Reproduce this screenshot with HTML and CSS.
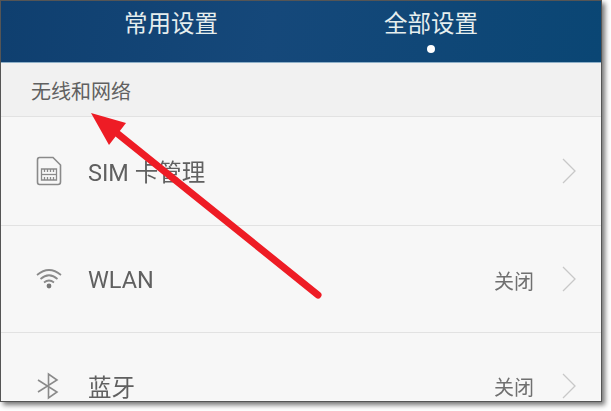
FILE: index.html
```html
<!DOCTYPE html>
<html>

<head>
    <meta charset="utf-8">
    <title>设置</title>
    <link rel="stylesheet" href="styles.css">
</head>

<body>
    <div id="screen">
        <div id="tabs">
            <div class="tab">常用设置</div>
            <div class="tab active">全部设置</div>
        </div>
        <div id="section-title">无线和网络</div>
        <div class="row row-sim">
            <svg class="icon" viewBox="0 0 26 30" width="26" height="30">
                <path d="M3.5 1.5H17L24.5 9V26Q24.5 28.5 22 28.5H3.5Q1.5 28.5 1.5 26V4Q1.5 1.5 3.5 1.5Z" fill="none" stroke="#8a8a8a" stroke-width="1.6" />
                <path d="M5.5 13H20.5V24H5.5Z" fill="none" stroke="#8a8a8a" stroke-width="1.3" />
                <path d="M5.5 18.500H20.500" stroke="#8a8a8a" stroke-width="1.3" />
                <path d="M8.500 13V16M11.500 13V16M14.500 13V16M17.500 13V16M8.500 21V24M11.500 21V24M14.500 21V24M17.500 21V24" stroke="#8a8a8a" stroke-width="1.3" />
            </svg>
            <span class="label">SIM 卡管理</span>
            <svg class="chevron" viewBox="0 0 14 26" width="14" height="26">
                <path d="M1 1L13 13L1 25" fill="none" stroke="#c8c8c8" stroke-width="1.3" />
            </svg>
        </div>
        <div class="row row-wlan">
            <svg class="icon" viewBox="0 0 26 30" width="26" height="30">
                <path d="M1 11Q13 1 25 11M4.500 15Q13 7.500 21.500 15M8 18.500Q13 14.500 18 18.500" fill="none" stroke="#8a8a8a" stroke-width="1.7" />
                <circle cx="13" cy="22" r="2.400" fill="#777" />
            </svg>
            <span class="label">WLAN</span>
            <span class="value">关闭</span>
            <svg class="chevron" viewBox="0 0 14 26" width="14" height="26">
                <path d="M1 1L13 13L1 25" fill="none" stroke="#c8c8c8" stroke-width="1.3" />
            </svg>
        </div>
        <div class="row row-bt">
            <svg class="icon" viewBox="0 0 26 30" width="26" height="30">
                <path d="M2 9L21 21L12.500 27V3L21 9L2 21" fill="none" stroke="#8a8a8a" stroke-width="1.6" />
            </svg>
            <span class="label">蓝牙</span>
            <span class="value">关闭</span>
            <svg class="chevron" viewBox="0 0 14 26" width="14" height="26">
                <path d="M1 1L13 13L1 25" fill="none" stroke="#c8c8c8" stroke-width="1.3" />
            </svg>
        </div>
    </div>
    <svg id="arrow" viewBox="0 0 611 411" width="611" height="411">
        <path d="M118 134L318 295" stroke="#ee1c25" stroke-width="7" stroke-linecap="round" />
        <path d="M91 113L126 123L109 145Z" fill="#ee1c25" />
    </svg>
</body>

</html>
```

FILE: styles.css
```css
body {
    margin: 0;
    width: 611px;
    height: 411px;
    overflow: hidden;
    background: #fff;
    font-family: Roboto, "Noto Sans CJK SC", sans-serif;
}

#screen {
    width: 600px;
    height: 400px;
    border: 1px solid #555;
    background: #f7f7f7;
    box-shadow: 3px 3px 5px rgba(0, 0, 0, 0.55);
    overflow: hidden;
    filter: blur(0.35px);
}

#tabs {
    height: 61px;
    display: flex;
    gap: 168px;
    padding-left: 123px;
    background: linear-gradient(100deg, #0f3f6f, #15487a 45%, #0a4674);
    border-bottom: 1px solid #8fb0c8;
}

.tab {
    width: 92px;
    height: 46px;
    line-height: 46px;
    text-align: center;
    white-space: nowrap;
    color: #e6eeee;
    font-size: 23.5px;
}

.tab.active::after {
    content: "";
    display: block;
    width: 8px;
    height: 8px;
    border-radius: 50%;
    background: #fff;
    margin: -2px 0 0 43px;
}

#section-title {
    height: 53px;
    line-height: 58px;
    padding-left: 30px;
    font-size: 20px;
    color: #606060;
    background: #f1f1f1;
    border-bottom: 1px solid #e2e2e2;
}

.row {
    display: flex;
    align-items: center;
    padding: 0 25px 0 35px;
    border-bottom: 1px solid #e2e2e2;
}

.row-sim {
    height: 108px;
}

.row-wlan {
    height: 106px;
}

.row-bt {
    height: 105px;
}

.row .icon {
    margin-right: 26px;
}

.label {
    flex: 1;
    font-size: 23.5px;
    color: #606060;
    padding-top: 1px;
}

.row-sim .label {
    padding-top: 0;
    margin-bottom: 1px;
}

.value {
    font-size: 20px;
    color: #707070;
    margin-right: 28px;
    padding-top: 2px;
}

#arrow {
    position: absolute;
    top: 0;
    left: 0;
}
```
